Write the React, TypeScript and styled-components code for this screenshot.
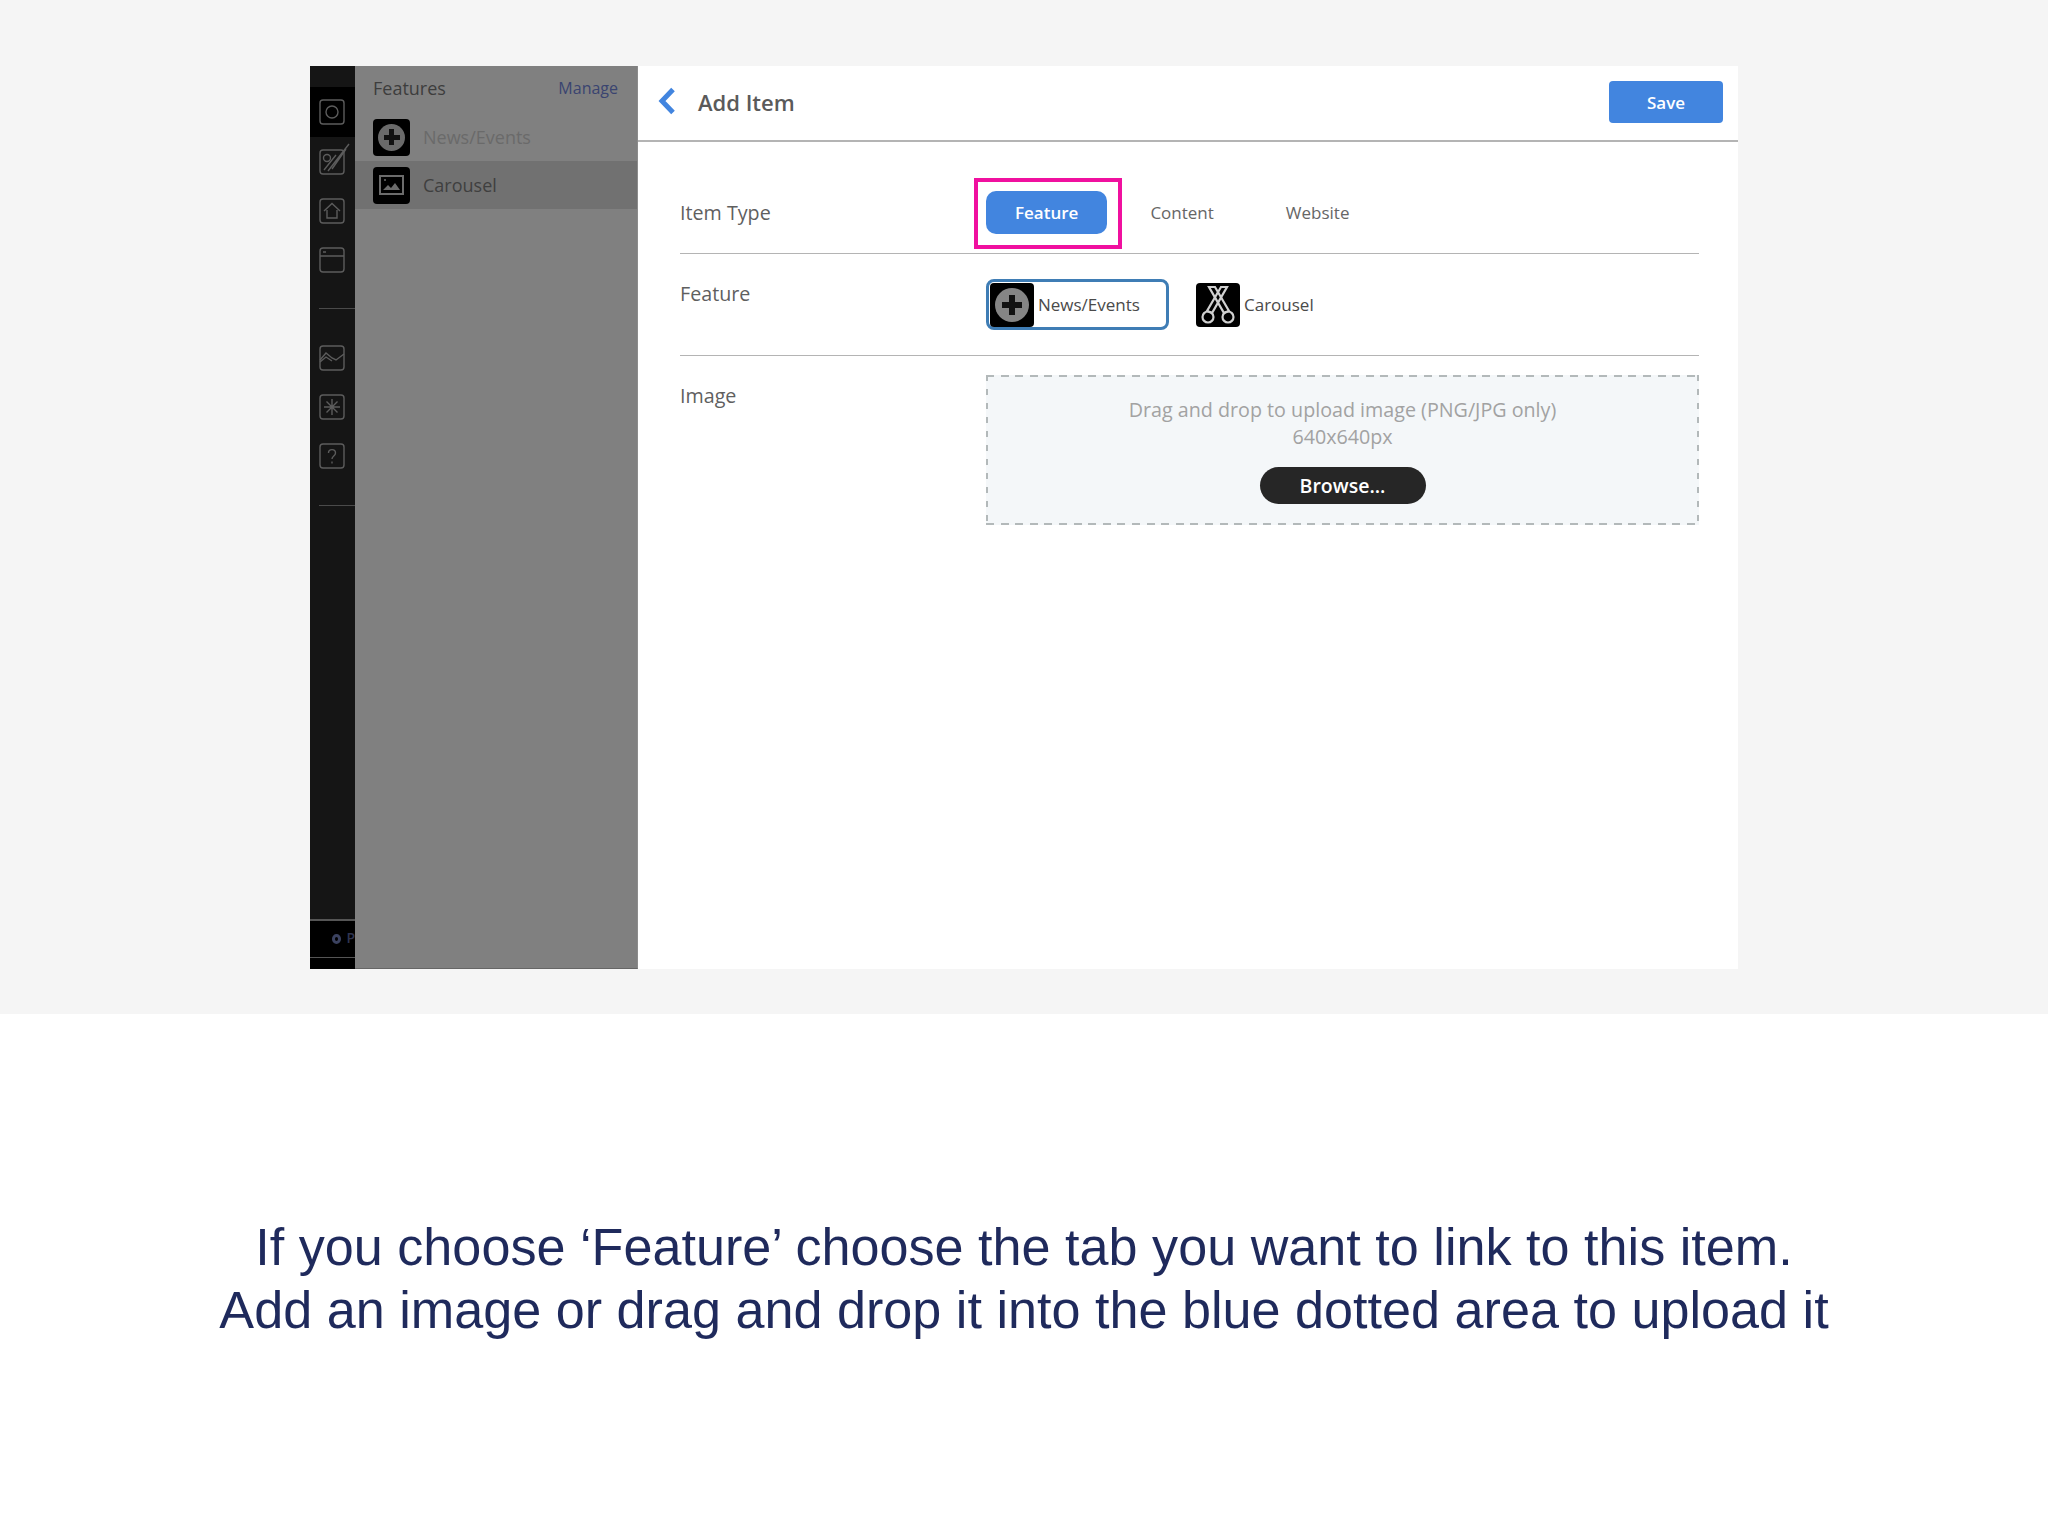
import React from 'react';
import styled, { createGlobalStyle } from 'styled-components';

const GlobalStyle = createGlobalStyle`
  html, body {
    margin: 0;
    padding: 0;
    background: #fff;
  }
  * {
    box-sizing: border-box;
  }
`;

const App = () => {
  return (
    <Page>
      <GlobalStyle />
      <TopBand>
        <Frame>
          <Rail>
            <RailCap />
            <RailItem $active>
              <RailIcon viewBox="0 0 26 26">
                <rect x="1" y="1" width="24" height="24" rx="3" />
                <circle cx="13" cy="13" r="6" />
              </RailIcon>
            </RailItem>
            <RailItem>
              <RailIcon viewBox="0 0 26 26">
                <rect x="1" y="1" width="24" height="24" rx="3" />
                <circle cx="8" cy="9" r="3.5" />
                <path d="M5 21 L17 6 M9 22 L30 -5 M13 20 L27 0" />
              </RailIcon>
            </RailItem>
            <RailItem>
              <RailIcon viewBox="0 0 26 26">
                <rect x="1" y="1" width="24" height="24" rx="3" />
                <path d="M5 13 L13 5.5 L21 13 M8 12 V20 H18 V12" />
              </RailIcon>
            </RailItem>
            <RailItem>
              <RailIcon viewBox="0 0 26 26">
                <rect x="1" y="1" width="24" height="24" rx="3" />
                <path d="M1 9 H25 M4 5 H7" />
              </RailIcon>
            </RailItem>
            <RailRule $top={24} />
            <RailGroup>
              <RailItem>
                <RailIcon viewBox="0 0 26 26">
                  <rect x="1" y="1" width="24" height="24" rx="3" />
                  <path d="M1 15 L7 8 L13 13 L17 15 L25 9 M1 17 L7 12 L13 16" />
                </RailIcon>
              </RailItem>
              <RailItem>
                <RailIcon viewBox="0 0 26 26">
                  <rect x="1" y="1" width="24" height="24" rx="3" />
                  <path d="M13 5 V21 M5 13 H21 M7.5 7.5 L18.5 18.5 M18.5 7.5 L7.5 18.5" />
                </RailIcon>
              </RailItem>
              <RailItem>
                <RailIcon viewBox="0 0 26 26">
                  <rect x="1" y="1" width="24" height="24" rx="3" />
                  <path d="M9.5 10 C9.5 5.5 16.5 5.5 16.5 10 C16.5 13 13 13 13 16 M13 18.5 V20.5" />
                </RailIcon>
              </RailItem>
            </RailGroup>
            <RailRule $top={25} />
            <RailFooter>
              <FooterDot />
              <FooterLetter>P</FooterLetter>
            </RailFooter>
          </Rail>

          <Panel>
            <PanelHeader>
              <PanelTitle>Features</PanelTitle>
              <ManageLink>Manage</ManageLink>
            </PanelHeader>
            <PanelRow>
              <BlackTile $size={37}>
                <PlusBadge $shade="#6a6a6a" />
              </BlackTile>
              <PanelLabel $muted>News/Events</PanelLabel>
            </PanelRow>
            <PanelRow $selected>
              <BlackTile $size={37}>
                <svg width="25" height="20" viewBox="0 0 25 20" fill="none" stroke="#6b6b6b" strokeWidth="2">
                  <rect x="1" y="1" width="23" height="18" />
                  <path d="M4 15 L9 10 L12 13 L16 8 L21 15 Z" fill="#6b6b6b" stroke="none" />
                  <circle cx="6" cy="5" r="1" fill="#6b6b6b" stroke="none" />
                </svg>
              </BlackTile>
              <PanelLabel>Carousel</PanelLabel>
            </PanelRow>
          </Panel>

          <Main>
            <Header>
              <BackArrow viewBox="0 0 18 28">
                <path d="M15 2.5 L4 14 L15 25.5" />
              </BackArrow>
              <HeaderTitle>Add Item</HeaderTitle>
              <SaveButton>Save</SaveButton>
            </Header>

            <Form>
              <TypeRow>
                <RowLabel>Item Type</RowLabel>
                <Tabs>
                  <Highlight />
                  <Tab $active>Feature</Tab>
                  <Tab>Content</Tab>
                  <Tab>Website</Tab>
                </Tabs>
              </TypeRow>

              <FeatureRow>
                <FeatureLabel>Feature</FeatureLabel>
                <Choices>
                  <Choice $selected>
                    <BlackTile $size={44}>
                      <PlusBadge $shade="#858585" $large />
                    </BlackTile>
                    <ChoiceLabel>News/Events</ChoiceLabel>
                  </Choice>
                  <Choice>
                    <BlackTile $size={44}>
                      <svg width="44" height="44" viewBox="0 0 44 44" fill="none" stroke="#d0d0d0" strokeWidth="2.2">
                        <path d="M13 4 L19 4 L33 28 L28 30 Z" />
                        <path d="M31 4 L25 4 L11 28 L16 30 Z" />
                        <circle cx="12" cy="34" r="5.5" />
                        <circle cx="32" cy="34" r="5.5" />
                      </svg>
                    </BlackTile>
                    <ChoiceLabel>Carousel</ChoiceLabel>
                  </Choice>
                </Choices>
              </FeatureRow>

              <ImageRow>
                <ImageLabel>Image</ImageLabel>
                <DropZone>
                  <DropText>
                    Drag and drop to upload image (PNG/JPG only)
                    <br />
                    640x640px
                  </DropText>
                  <BrowseButton>Browse...</BrowseButton>
                </DropZone>
              </ImageRow>
            </Form>
          </Main>
        </Frame>
      </TopBand>

      <Caption>
        If you choose ‘Feature’ choose the tab you want to link to this item.
        <br />
        Add an image or drag and drop it into the blue dotted area to upload it
      </Caption>
    </Page>
  );
};

const Page = styled.div`
  width: 2048px;
  height: 1536px;
  display: flex;
  flex-direction: column;
  background: #fff;
  font-family: 'Open Sans', sans-serif;
  overflow: hidden;
`;

const TopBand = styled.div`
  height: 1014px;
  padding: 66px 310px 45px;
  background: #f5f5f5;
`;

const Frame = styled.div`
  width: 1428px;
  height: 903px;
  display: flex;
  background: #fff;
`;

const Rail = styled.div`
  width: 45px;
  display: flex;
  flex-direction: column;
  background: #151515;
  overflow: hidden;
`;

const RailCap = styled.div`
  height: 21px;
  flex: none;
`;

const RailItem = styled.div<{ $active?: boolean }>`
  height: ${(p) => (p.$active ? 50 : 49)}px;
  flex: none;
  display: flex;
  align-items: center;
  padding-left: 9px;
  background: ${(p) => (p.$active ? '#000' : 'transparent')};
`;

const RailIcon = styled.svg`
  width: 26px;
  height: 26px;
  fill: none;
  stroke: #5c5c5c;
  stroke-width: 1.4;
  overflow: visible;
`;

const RailGroup = styled.div`
  margin-top: 24px;
  display: flex;
  flex-direction: column;
`;

const RailRule = styled.div<{ $top: number }>`
  height: 1px;
  flex: none;
  margin: ${(p) => p.$top}px 0 0 9px;
  background: #4a4a4a;
`;

const RailFooter = styled.div`
  margin-top: auto;
  height: 50px;
  padding-left: 22px;
  display: flex;
  align-items: flex-start;
  gap: 5px;
  flex: none;
  background: #000;
  border-top: 2px solid #555;
  box-shadow: inset 0 -11px 0 #000, inset 0 -12px 0 #555;
  color: #2f3450;
`;

const FooterDot = styled.span`
  width: 10px;
  height: 10px;
  margin-top: 13px;
  border-radius: 50%;
  border: 3px solid #3b4260;
`;

const FooterLetter = styled.span`
  margin-top: 7px;
  font-size: 14px;
  font-weight: 600;
`;

const Panel = styled.div`
  width: 283px;
  background: #808080;
  border-right: 1px solid #8c8c8c;
  border-bottom: 1px solid #666;
`;

const PanelHeader = styled.div`
  height: 47px;
  padding: 0 19px 3px 18px;
  display: flex;
  align-items: center;
  justify-content: space-between;
`;

const PanelTitle = styled.span`
  font-size: 18px;
  color: #3d3d3d;
`;

const ManageLink = styled.span`
  font-size: 16px;
  color: #3a4470;
`;

const PanelRow = styled.div<{ $selected?: boolean }>`
  height: 48px;
  padding-left: 18px;
  display: flex;
  align-items: center;
  gap: 13px;
  background: ${(p) => (p.$selected ? '#717171' : 'transparent')};
`;

const PanelLabel = styled.span<{ $muted?: boolean }>`
  font-size: 18px;
  color: ${(p) => (p.$muted ? '#6a6a6a' : '#3f3f3f')};
`;

const BlackTile = styled.span<{ $size: number }>`
  width: ${(p) => p.$size}px;
  height: ${(p) => p.$size}px;
  flex: none;
  display: flex;
  align-items: center;
  justify-content: center;
  background: #000;
  border-radius: 4px;
`;

const PlusBadge = styled.span<{ $shade: string; $large?: boolean }>`
  width: ${(p) => (p.$large ? 34 : 27)}px;
  height: ${(p) => (p.$large ? 34 : 27)}px;
  border-radius: 50%;
  background:
    linear-gradient(#111, #111) center / ${(p) => (p.$large ? '20px 6px' : '16px 5px')} no-repeat,
    linear-gradient(#111, #111) center / ${(p) => (p.$large ? '6px 20px' : '5px 16px')} no-repeat,
    ${(p) => p.$shade};
`;

const Main = styled.div`
  flex: 1;
  display: flex;
  flex-direction: column;
  background: #fff;
`;

const Header = styled.div`
  height: 76px;
  padding: 0 15px 2px 20px;
  display: flex;
  align-items: center;
  border-bottom: 2px solid #b4b4b4;
`;

const BackArrow = styled.svg`
  width: 18px;
  height: 28px;
  margin-bottom: 3px;
  fill: none;
  stroke: #4285df;
  stroke-width: 5;
`;

const HeaderTitle = styled.h1`
  margin: 0 0 0 22px;
  flex: 1;
  font-size: 22px;
  font-weight: 600;
  color: #5a5a5a;
`;

const SaveButton = styled.button`
  width: 114px;
  height: 42px;
  padding: 0;
  border: 0;
  border-radius: 4px;
  background: #4285df;
  color: #fff;
  font-family: inherit;
  font-size: 17px;
  font-weight: 600;
`;

const Form = styled.div`
  padding: 0 39px 0 42px;
`;

const FormRow = styled.div`
  display: grid;
  grid-template-columns: 306px 1fr;
`;

const TypeRow = styled(FormRow)`
  padding: 49px 0 19px;
  border-bottom: 1px solid #b4b4b4;
  align-items: center;
`;

const FeatureRow = styled(FormRow)`
  padding: 25px 0 25px;
  border-bottom: 1px solid #b4b4b4;
  align-items: start;
`;

const ImageRow = styled(FormRow)`
  padding-top: 19px;
  align-items: start;
`;

const RowLabel = styled.label`
  font-size: 19.7px;
  color: #5f5f5f;
  line-height: 27px;
`;

const FeatureLabel = styled(RowLabel)`
  margin-top: 1px;
`;

const ImageLabel = styled(RowLabel)`
  margin-top: 7px;
`;

const Tabs = styled.div`
  position: relative;
  display: flex;
  gap: 14px;
`;

const Highlight = styled.div`
  position: absolute;
  left: -12px;
  top: -13px;
  width: 148px;
  height: 71px;
  border: 4px solid #f0109f;
`;

const Tab = styled.div<{ $active?: boolean }>`
  height: 43px;
  padding: 0 29px;
  display: flex;
  align-items: center;
  border-radius: 10px;
  font-size: 17px;
  font-weight: ${(p) => (p.$active ? 600 : 400)};
  color: ${(p) => (p.$active ? '#fff' : '#666')};
  background: ${(p) => (p.$active ? '#4285df' : 'transparent')};
`;

const Choices = styled.div`
  display: flex;
  gap: 24px;
`;

const Choice = styled.div<{ $selected?: boolean }>`
  height: 51px;
  width: ${(p) => (p.$selected ? '183px' : 'auto')};
  padding-left: ${(p) => (p.$selected ? 1 : 0)}px;
  display: flex;
  align-items: center;
  gap: 4px;
  border: 3px solid ${(p) => (p.$selected ? '#3f7db5' : 'transparent')};
  border-radius: 8px;
  background: #fff;
`;

const ChoiceLabel = styled.span`
  font-size: 17px;
  color: #4a4a4a;
`;

const DropZone = styled.div`
  height: 150px;
  padding-top: 21px;
  display: flex;
  flex-direction: column;
  align-items: center;
  background:
    repeating-linear-gradient(90deg, #b3b9ba 0 8px, transparent 8px 14.6px) top / 100% 2px no-repeat,
    repeating-linear-gradient(90deg, #b3b9ba 0 8px, transparent 8px 14.6px) bottom / 100% 2px no-repeat,
    repeating-linear-gradient(180deg, #b3b9ba 0 6px, transparent 6px 14px) left / 2px 100% no-repeat,
    repeating-linear-gradient(180deg, #b3b9ba 0 6px, transparent 6px 14px) right / 2px 100% no-repeat,
    #f4f7f9;
`;

const DropText = styled.div`
  font-size: 19.7px;
  line-height: 27px;
  color: #a2a2a2;
  text-align: center;
`;

const BrowseButton = styled.button`
  width: 166px;
  height: 37px;
  margin-top: 17px;
  padding: 0;
  border: 0;
  border-radius: 19px;
  background: #262626;
  color: #fff;
  font-family: inherit;
  font-size: 19.5px;
  font-weight: 600;
`;

const Caption = styled.p`
  margin: 0;
  padding-top: 202px;
  text-align: center;
  font-family: 'Liberation Sans', Arial, sans-serif;
  font-size: 52.17px;
  line-height: 63px;
  color: #1f2a5c;
`;

export default App;
